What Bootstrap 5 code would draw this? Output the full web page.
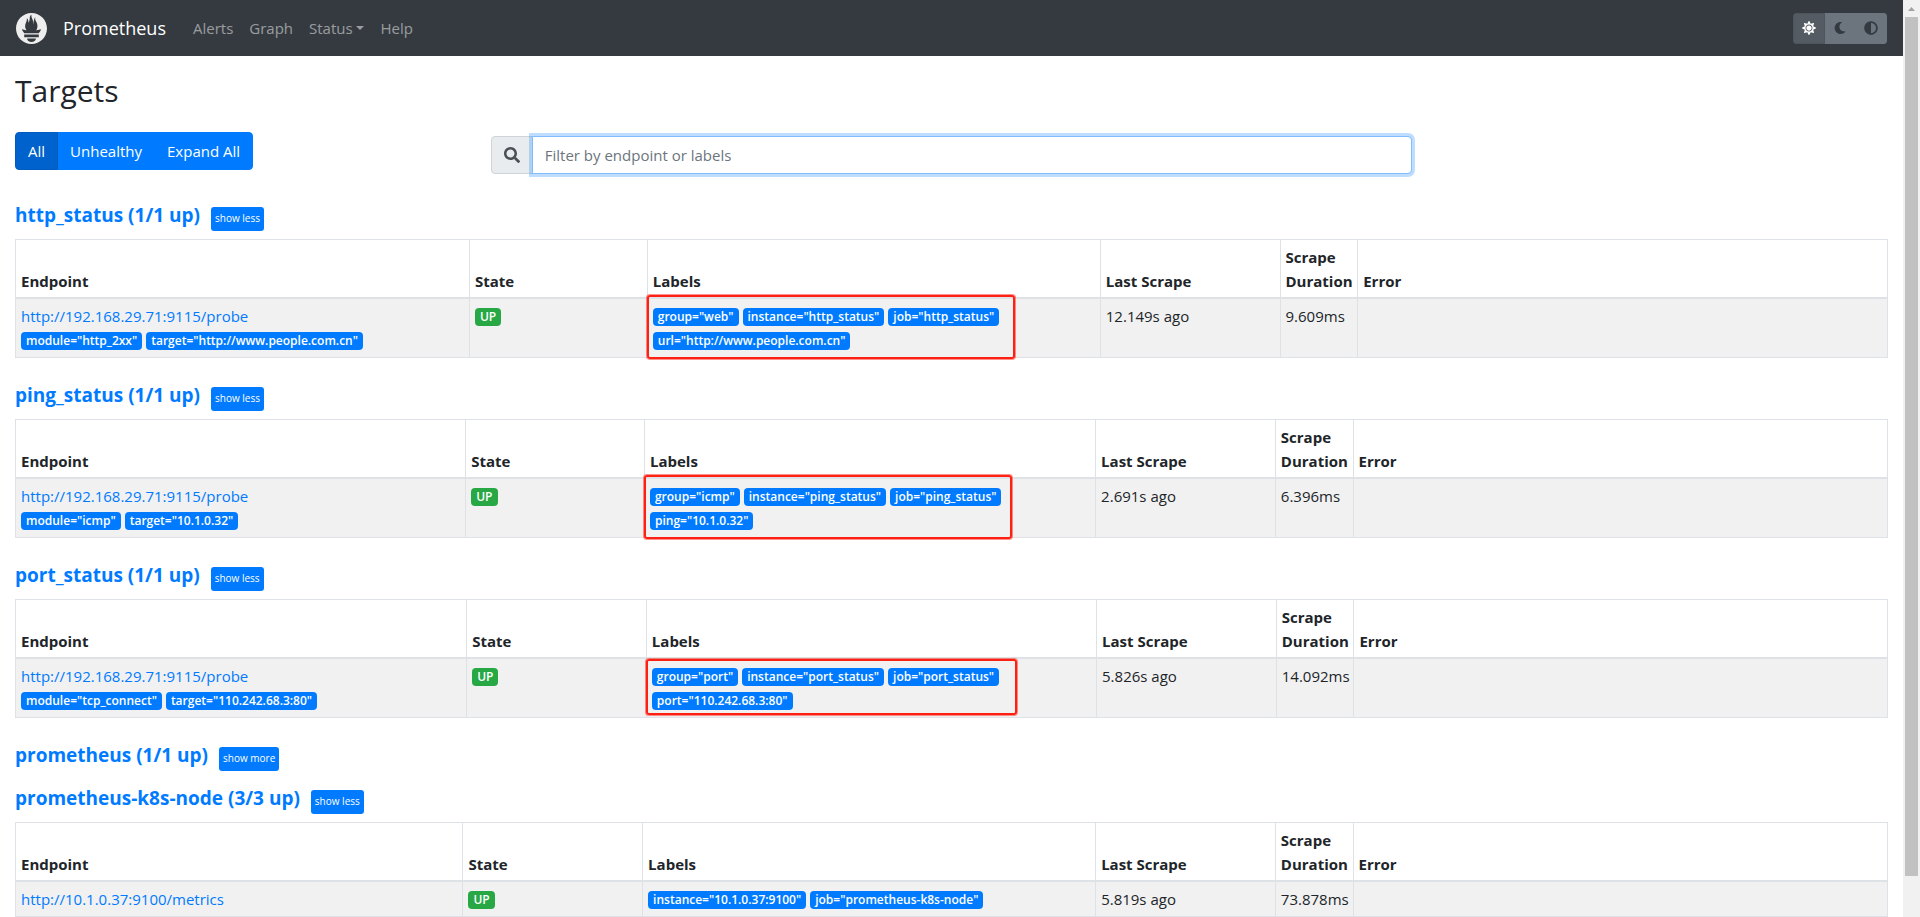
<!DOCTYPE html>
<html lang="en">
<head>
<meta charset="utf-8">
<meta name="viewport" content="width=device-width, initial-scale=1">
<title>Prometheus Time Series Collection and Processing Server</title>
<link href="https://cdn.jsdelivr.net/npm/bootstrap@5.3.0/dist/css/bootstrap.min.css" rel="stylesheet">
<style>
  :root { --prom-blue: #007bff; --prom-line: #dee2e6; }
  body { font-family: "Open Sans", "Noto Sans", sans-serif; font-size: 15px; line-height: 24px; color: #212529; }
  a { color: var(--prom-blue); text-decoration: none; }

  .top-bar { background: #343a40; height: 56px; padding: 0 16px; }
  .top-bar .navbar-brand { font-size: 18px; gap: 16px; margin-right: 19px; padding: 0; }
  .top-bar .nav-link { color: rgba(255,255,255,.5); padding: 8px; }
  .theme-switch .btn { background: #6c757d; border: 1px solid #6c757d; color: #343a40; width: 32px; height: 31px; padding: 0; border-radius: 3px; }
  .theme-switch .btn.active { background: #545b62; border-color: #4e555b; color: #fff; }

  .page-body { padding: 16px 15px 0; }
  .page-title { font-size: 30px; line-height: 38px; font-weight: 500; margin-bottom: 22px; }
  .filter-row { --bs-gutter-x: 30px; margin-bottom: 29px; }
  .filter-buttons .btn { background: var(--prom-blue); border-color: var(--prom-blue); color: #fff; font-size: 15px; line-height: 24px; padding: 6px 12px; border-radius: 4px; }
  .filter-buttons .btn.active { background: #0062cc; border-color: #005cbf; }
  .search-box { padding-top: 4px; }
  .search-box .input-group-text { background: #e9ecef; border-color: #ced4da; color: #495057; padding: 0 12px; border-radius: 4px; }
  .search-box .form-control { height: 38px; font-size: 15px; border-radius: 4px; border-color: #80bdff; box-shadow: 0 0 0 3px rgba(0,123,255,.25); }
  .search-box .form-control::placeholder { color: #6c757d; }

  .pool { margin-bottom: 25px; }
  .pool.folded { margin-bottom: 15px; }
  .pool-head { display: flex; align-items: flex-start; gap: 11px; padding-bottom: 8px; }
  .pool-head h3 { font-size: 19px; line-height: 24px; font-weight: 700; margin: 0; }
  .pool-head .btn { background: var(--prom-blue); color: #fff; border: 0; border-radius: 3px; font-size: 10px; line-height: 22px; padding: 0 4px 2px; margin-top: 4px; }
  .pool.folded .pool-head { padding-bottom: 0; }

  .target-table { table-layout: fixed; border: 1px solid var(--prom-line); margin: 0; }
  .target-table > :not(caption) > * > * { padding: 5px; border: 1px solid var(--prom-line); color: #212529; background: #fff; vertical-align: top; }
  .target-table > thead > tr > th { vertical-align: bottom; padding-bottom: 4px; border-bottom-width: 2px; font-weight: 700; }
  .target-table > tbody > tr > td { background: #f1f1f1; }
  .target-table a { display: block; }
  .target-table col:nth-child(1) { width: 24.1%; }
  .target-table col:nth-child(2) { width: 9.6%; }
  .target-table col:nth-child(3) { width: 24.05%; }
  .target-table col:nth-child(4) { width: 9.6%; }
  .target-table col:nth-child(5) { width: 4.15%; }
  .cols-http col:nth-child(1) { width: 24.25%; }
  .cols-http col:nth-child(2) { width: 9.5%; }
  .cols-http col:nth-child(3) { width: 24.2%; }
  .cols-ping col:nth-child(1) { width: 24.05%; }
  .cols-ping col:nth-child(2) { width: 9.55%; }
  .cols-ping col:nth-child(3) { width: 24.1%; }
  .cols-node col:nth-child(1) { width: 23.9%; }
  .cols-node col:nth-child(3) { width: 24.2%; }

  .tags { display: flex; flex-wrap: wrap; gap: 6px 4px; padding: 4px 0 2px; position: relative; }
  .tags .badge { background: var(--prom-blue); color: #fff; font-size: 12px; line-height: 12px; font-weight: 600; padding: 3px 5px; border-radius: 4px; }
  .tags .badge.is-up { background: #28a745; }
  .marker { position: absolute; top: -9px; bottom: -7px; left: -6px; width: 368px; border: 2px solid #ff2014; border-radius: 3px; box-shadow: 0 0 0 1px rgba(255,32,20,.5); pointer-events: none; }
  .marker.tight { top: -5px; bottom: -3px; width: 371px; }

  .scroll-track { width: 17px; background: #f1f1f1; padding: 0 2px 41px; }
  .scroll-track svg { flex: 0 0 17px; }
  .scroll-thumb { background: #c1c1c1; }
</style>
</head>
<body>
<div class="d-flex vh-100 overflow-hidden">
  <div class="flex-grow-1 overflow-hidden">
    <nav class="top-bar d-flex align-items-center navbar-dark">
      <a class="navbar-brand d-flex align-items-center text-white" href="#">
        <svg width="31" height="31" viewBox="0 0 24 24" fill="#eee" aria-hidden="true"><path d="M12 0C5.373 0 0 5.372 0 12c0 6.627 5.373 12 12 12s12-5.373 12-12c0-6.628-5.373-12-12-12zm0 22.46c-1.885 0-3.414-1.26-3.414-2.814h6.828c0 1.553-1.528 2.813-3.414 2.813zm5.64-3.745H6.36v-2.046h11.28v2.046zm-.04-3.098H6.391c-.037-.043-.075-.086-.111-.13-1.155-1.401-1.427-2.133-1.69-2.879-.005-.025 1.4.287 2.395.511 0 0 .513.119 1.262.255-.72-.843-1.147-1.915-1.147-3.01 0-2.406 1.845-4.508 1.18-6.207.648.053 1.34 1.367 1.387 3.422.689-.951.977-2.69.977-3.755 0-1.103.727-2.385 1.454-2.429-.648 1.069.168 1.984.894 4.256.272.854.237 2.29.447 3.201.07-1.892.395-4.652 1.595-5.605-.529 1.2.079 2.702.494 3.424.671 1.164 1.078 2.047 1.078 3.716a4.642 4.642 0 01-1.11 2.996c.792-.149 1.34-.283 1.34-.283l2.573-.502s-.374 1.538-1.81 3.019z"/></svg>
        <span>Prometheus</span>
      </a>
      <ul class="nav me-auto">
        <li class="nav-item"><a class="nav-link" href="#">Alerts</a></li>
        <li class="nav-item"><a class="nav-link" href="#">Graph</a></li>
        <li class="nav-item dropdown"><a class="nav-link dropdown-toggle" href="#" role="button" data-bs-toggle="dropdown" aria-expanded="false">Status</a></li>
        <li class="nav-item"><a class="nav-link" href="#">Help</a></li>
      </ul>
      <div class="btn-group theme-switch" role="group" aria-label="Theme">
        <button type="button" class="btn active d-flex align-items-center justify-content-center" aria-label="Light theme"><svg width="14" height="14" viewBox="0 0 512 512" fill="currentColor"><path d="M256 160c-52.9 0-96 43.1-96 96s43.1 96 96 96 96-43.1 96-96-43.1-96-96-96zm246.4 80.5l-94.7-47.3 33.5-100.4c4.5-13.6-8.4-26.5-21.9-21.9l-100.4 33.5-47.4-94.8c-6.4-12.8-24.6-12.8-31 0l-47.3 94.7L92.7 70.8c-13.6-4.5-26.5 8.4-21.9 21.9l33.5 100.4-94.7 47.4c-12.8 6.4-12.8 24.6 0 31l94.7 47.3-33.5 100.5c-4.5 13.6 8.4 26.5 21.9 21.9l100.4-33.5 47.3 94.7c6.4 12.8 24.6 12.8 31 0l47.3-94.7 100.4 33.5c13.6 4.5 26.5-8.4 21.9-21.9l-33.5-100.4 94.7-47.3c13-6.5 13-24.7.2-31.1zm-155.9 106c-49.9 49.9-131.1 49.9-181 0-49.9-49.9-49.9-131.1 0-181 49.9-49.9 131.1-49.9 181 0 49.9 49.9 49.9 131.1 0 181z"/></svg></button>
        <button type="button" class="btn d-flex align-items-center justify-content-center" aria-label="Dark theme"><svg width="12" height="12" viewBox="0 0 512 512" fill="currentColor"><path d="M283.211 512c78.962 0 151.079-35.925 198.857-94.792 7.068-8.708-.639-21.43-11.562-19.35-124.203 23.654-238.262-71.576-238.262-196.954 0-72.222 38.662-138.635 101.498-174.394 9.686-5.512 7.25-20.197-3.756-22.23A258.156 258.156 0 0 0 283.211 0c-141.309 0-256 114.511-256 256 0 141.309 114.511 256 256 256z"/></svg></button>
        <button type="button" class="btn d-flex align-items-center justify-content-center" aria-label="Browser theme"><svg width="14" height="14" viewBox="0 0 512 512" fill="currentColor"><path d="M8 256c0 136.966 111.033 248 248 248s248-111.034 248-248S392.966 8 256 8 8 119.033 8 256zm248 184V72c101.705 0 184 82.311 184 184 0 101.705-82.311 184-184 184z"/></svg></button>
      </div>
    </nav>

    <main class="page-body">
      <h2 class="page-title">Targets</h2>
      <div class="row filter-row">
        <div class="col-3">
          <div class="btn-group filter-buttons" role="group" aria-label="Target filter">
            <button type="button" class="btn active">All</button>
            <button type="button" class="btn">Unhealthy</button>
            <button type="button" class="btn">Expand All</button>
          </div>
        </div>
        <div class="col-6 search-box">
          <div class="input-group">
            <label class="input-group-text" for="target-search" aria-label="Search"><svg width="16" height="16" viewBox="0 0 512 512" fill="currentColor"><path d="M505 442.7L405.3 343c-4.5-4.5-10.6-7-17-7H372c27.6-35.3 44-79.7 44-128C416 93.1 322.9 0 208 0S0 93.1 0 208s93.1 208 208 208c48.3 0 92.7-16.4 128-44v16.3c0 6.4 2.5 12.5 7 17l99.7 99.7c9.4 9.4 24.6 9.4 33.9 0l28.3-28.3c9.4-9.4 9.4-24.6.1-34zM208 336c-70.7 0-128-57.2-128-128 0-70.7 57.2-128 128-128 70.7 0 128 57.2 128 128 0 70.7-57.2 128-128 128z"/></svg></label>
            <input id="target-search" type="text" class="form-control" placeholder="Filter by endpoint or labels">
          </div>
        </div>
      </div>

      <section class="pool">
        <div class="pool-head"><h3><a href="#http_status">http_status (1/1 up)</a></h3><button type="button" class="btn">show less</button></div>
        <table class="table target-table cols-http" id="http_status">
          <colgroup><col><col><col><col><col><col></colgroup>
          <thead><tr><th>Endpoint</th><th>State</th><th>Labels</th><th>Last Scrape</th><th>Scrape Duration</th><th>Error</th></tr></thead>
          <tbody><tr>
            <td><a href="#">http://192.168.29.71:9115/probe</a><div class="tags"><span class="badge">module="http_2xx"</span><span class="badge">target="http://www.people.com.cn"</span></div></td>
            <td><div class="tags"><span class="badge is-up">UP</span></div></td>
            <td><div class="tags"><span class="badge">group="web"</span><span class="badge">instance="http_status"</span><span class="badge">job="http_status"</span><span class="badge">url="http://www.people.com.cn"</span><div class="marker"></div></div></td>
            <td>12.149s ago</td><td>9.609ms</td><td></td>
          </tr></tbody>
        </table>
      </section>

      <section class="pool">
        <div class="pool-head"><h3><a href="#ping_status">ping_status (1/1 up)</a></h3><button type="button" class="btn">show less</button></div>
        <table class="table target-table cols-ping" id="ping_status">
          <colgroup><col><col><col><col><col><col></colgroup>
          <thead><tr><th>Endpoint</th><th>State</th><th>Labels</th><th>Last Scrape</th><th>Scrape Duration</th><th>Error</th></tr></thead>
          <tbody><tr>
            <td><a href="#">http://192.168.29.71:9115/probe</a><div class="tags"><span class="badge">module="icmp"</span><span class="badge">target="10.1.0.32"</span></div></td>
            <td><div class="tags"><span class="badge is-up">UP</span></div></td>
            <td><div class="tags"><span class="badge">group="icmp"</span><span class="badge">instance="ping_status"</span><span class="badge">job="ping_status"</span><span class="badge">ping="10.1.0.32"</span><div class="marker"></div></div></td>
            <td>2.691s ago</td><td>6.396ms</td><td></td>
          </tr></tbody>
        </table>
      </section>

      <section class="pool">
        <div class="pool-head"><h3><a href="#port_status">port_status (1/1 up)</a></h3><button type="button" class="btn">show less</button></div>
        <table class="table target-table" id="port_status">
          <colgroup><col><col><col><col><col><col></colgroup>
          <thead><tr><th>Endpoint</th><th>State</th><th>Labels</th><th>Last Scrape</th><th>Scrape Duration</th><th>Error</th></tr></thead>
          <tbody><tr>
            <td><a href="#">http://192.168.29.71:9115/probe</a><div class="tags"><span class="badge">module="tcp_connect"</span><span class="badge">target="110.242.68.3:80"</span></div></td>
            <td><div class="tags"><span class="badge is-up">UP</span></div></td>
            <td><div class="tags"><span class="badge">group="port"</span><span class="badge">instance="port_status"</span><span class="badge">job="port_status"</span><span class="badge">port="110.242.68.3:80"</span><div class="marker tight"></div></div></td>
            <td>5.826s ago</td><td>14.092ms</td><td></td>
          </tr></tbody>
        </table>
      </section>

      <section class="pool folded">
        <div class="pool-head"><h3><a href="#prometheus">prometheus (1/1 up)</a></h3><button type="button" class="btn">show more</button></div>
      </section>

      <section class="pool">
        <div class="pool-head"><h3><a href="#node">prometheus-k8s-node (3/3 up)</a></h3><button type="button" class="btn">show less</button></div>
        <table class="table target-table cols-node" id="node">
          <colgroup><col><col><col><col><col><col></colgroup>
          <thead><tr><th>Endpoint</th><th>State</th><th>Labels</th><th>Last Scrape</th><th>Scrape Duration</th><th>Error</th></tr></thead>
          <tbody><tr>
            <td><a href="#">http://10.1.0.37:9100/metrics</a></td>
            <td><div class="tags"><span class="badge is-up">UP</span></div></td>
            <td><div class="tags"><span class="badge">instance="10.1.0.37:9100"</span><span class="badge">job="prometheus-k8s-node"</span></div></td>
            <td>5.819s ago</td><td>73.878ms</td><td></td>
          </tr></tbody>
        </table>
      </section>
    </main>
  </div>
  <div class="scroll-track d-flex flex-column flex-shrink-0" aria-hidden="true">
    <svg width="13" height="17" viewBox="0 0 13 17"><path d="M3 11 6.500 7 10 11z" fill="#a3a3a3"/></svg>
    <div class="scroll-thumb flex-grow-1"></div>
  </div>
</div>
<script src="https://cdn.jsdelivr.net/npm/bootstrap@5.3.0/dist/js/bootstrap.bundle.min.js"></script>
</body>
</html>
